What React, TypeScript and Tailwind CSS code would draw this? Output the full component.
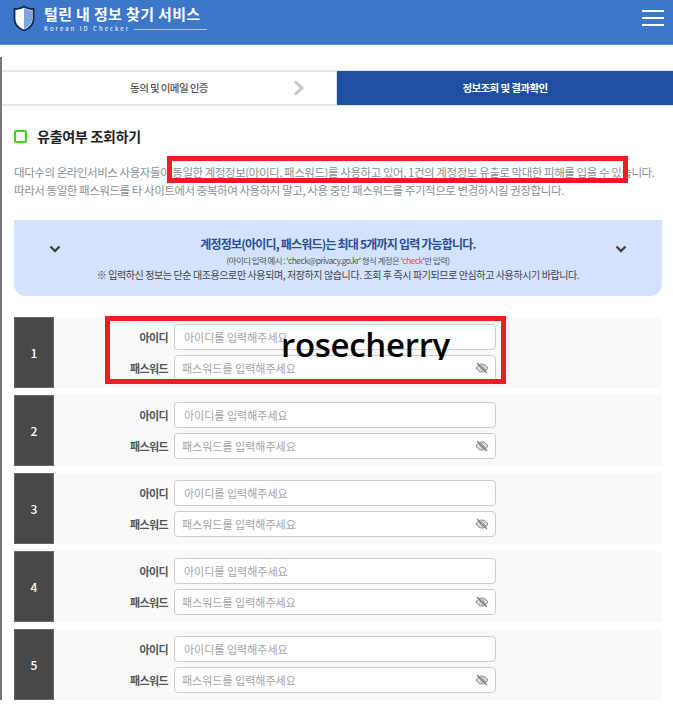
import React from "react";

const rows = [1, 2, 3, 4, 5];

const Shield = () => (
  <svg width="22" height="27" viewBox="0 0 22 27" className="block">
    <path d="M11 1.5 C8 3.5 4.5 4.5 1.5 4 L1.5 14 C1.5 19.5 6 23.5 11 25.5 C16 23.5 20.5 19.5 20.5 14 L20.5 4 C17.5 4.5 14 3.5 11 1.5 Z" fill="#ffffff" stroke="#14264f" strokeWidth="1.8" />
    <path d="M11 3 C13.8 4.8 16.5 5.6 19.2 5.4 L19.2 14 C19.2 18.6 15.4 22 11 24 Z" fill="#7ba6dc" />
  </svg>
);

const Chevron = () => (
  <svg width="12" height="8" viewBox="0 0 12 8" className="block">
    <path d="M1.5 1.5 L6 6 L10.5 1.5" fill="none" stroke="#444444" strokeWidth="2.4" />
  </svg>
);

const EyeOff = () => (
  <svg width="14" height="12" viewBox="0 0 14 12" className="block">
    <path d="M1 6 C3 3 5 2 7 2 C9 2 11 3 13 6 C11 9 9 10 7 10 C5 10 3 9 1 6 Z" fill="#dcdcdc" stroke="#888888" strokeWidth="1" />
    <path d="M4 4 L8 9 M6.500 3 L10.500 8" stroke="#888888" strokeWidth="0.8" />
    <path d="M2 1 L12 11" stroke="#777777" strokeWidth="1.1" />
  </svg>
);

const Field = ({ label, placeholder, eye }: { label: string; placeholder: string; eye?: boolean }) => (
  <div className="flex items-center">
    <span className="w-[120px] pr-[6px] text-right text-[11px] font-bold tracking-[-0.6px] text-[#555555]">{label}</span>
    <div className={`flex h-[26px] w-[322px] items-center justify-between rounded-[4px] border border-[#cccccc] bg-white pr-[6px] ${eye ? "pl-[7px]" : "pl-[9px]"}`}>
      <span className="text-[11px] text-[#a3a3a3]">{placeholder}</span>
      {eye && <EyeOff />}
    </div>
  </div>
);

export default function App() {
  return (
    <div className="relative h-[704px] w-[673px] overflow-hidden bg-white font-['Noto_Sans_CJK_KR','Noto_Sans',sans-serif]">
      <header className="flex h-[45px] items-start justify-between border-b border-[#5a8bd0] bg-[#3c77c9]">
        <div className="ml-[13px] mt-[5px] flex gap-[9px]">
          <Shield />
          <div className="mt-[-2px]">
            <div className="text-[15px] font-bold leading-[22px] tracking-[0.35px] text-white">털린 내 정보 찾기 서비스</div>
            <div className="flex items-center gap-[4px]">
              <span className="text-[6px] leading-[8px] tracking-[2.05px] text-white">Korean ID Checker</span>
              <span className="h-px w-[73px] bg-[#a9c4ea]" />
            </div>
          </div>
        </div>
        <div className="mr-[9px] mt-[10px] flex w-[22px] flex-col gap-[5px]">
          <span className="h-[2px] bg-white" />
          <span className="h-[2px] bg-white" />
          <span className="h-[2px] bg-white" />
        </div>
      </header>

      <div className="mt-[12px] border-l-2 border-[#777777] pt-[13px]">
        <nav className="flex h-[36px] border-y-2 border-[#e6e6e6]">
          <div className="relative flex w-[335px] items-center justify-center border-r border-[#e0e0e0]">
            <span className="text-[10.5px] font-medium tracking-[-0.6px] text-[#555555]">동의 및 이메일 인증</span>
            <svg width="12" height="16" viewBox="0 0 12 16" className="absolute right-[31px] top-[8px]">
              <path d="M2 1.500 L9 8 L2 14.500" fill="none" stroke="#c8c8c8" strokeWidth="3" />
            </svg>
          </div>
          <div className="-my-[1px] flex flex-1 items-center justify-center bg-[#1f4fa0]">
            <span className="text-[10.5px] font-bold tracking-[-0.6px] text-white">정보조회 및 결과확인</span>
          </div>
        </nav>

        <section className="pl-[12px] pr-[11px]">
          <h2 className="mt-[19px] flex items-center gap-[10px] text-[14px] font-bold leading-[22px] tracking-[-0.25px] text-[#222222]">
            <span className="h-[13px] w-[13px] rounded-[2px] border-2 border-[#3fd41a]" />
            유출여부 조회하기
          </h2>

          <p className="mt-[16px] whitespace-nowrap text-[11.5px] leading-[18px] tracking-[-0.45px] text-[#8a8f98]">
            대다수의 온라인서비스 사용자들이 동일한 계정정보(아이디, 패스워드)를 사용하고 있어, 1건의 계정정보 유출로 막대한 피해를 입을 수 있습니다.
            <br />
            따라서 동일한 패스워드를 타 사이트에서 중복하여 사용하지 말고, 사용 중인 패스워드를 주기적으로 변경하시길 권장합니다.
          </p>

          <div className="mt-[21px] flex h-[76px] items-start justify-between rounded-b-[12px] bg-[#d3e3fc] px-[35px]">
            <div className="mt-[25px]"><Chevron /></div>
            <div className="mt-[15px] whitespace-nowrap text-center">
              <div className="text-[12px] font-bold leading-[18px] tracking-[-0.8px] text-[#2a4f96]">
                계정정보(아이디, 패스워드)는 최대 5개까지 입력 가능합니다.
              </div>
              <div className="text-[8.5px] leading-[14px] tracking-[-0.6px] text-[#555555]">
                (아이디 입력 예시 : 'check@privacy.go.kr' 형식 계정은 '<span className="text-[#d9534f]">check</span>'만 입력)
              </div>
              <div className="text-[10px] leading-[15px] tracking-[-0.4px] text-[#444444]">
                ※ 입력하신 정보는 단순 대조용으로만 사용되며, 저장하지 않습니다. 조회 후 즉시 파기되므로 안심하고 사용하시기 바랍니다.
              </div>
            </div>
            <div className="mt-[25px]"><Chevron /></div>
          </div>

          <div className="mt-[21px] flex flex-col gap-[7px]">
            {rows.map((n) => (
              <div key={n} className="flex h-[71px] bg-[#f9f9f9]">
                <div className="flex w-[40px] items-center justify-center border border-[#666666] bg-[#484848] text-[12px] font-medium text-white">
                  {n}
                </div>
                <div className="flex flex-col justify-center gap-[5px]">
                  <Field label="아이디" placeholder="아이디를 입력해주세요" />
                  <Field label="패스워드" placeholder="패스워드를 입력해주세요" eye />
                </div>
              </div>
            ))}
          </div>
        </section>
      </div>

      {/* red annotation boxes drawn on top of the capture */}
      <div className="absolute left-[167px] top-[156px] h-[27px] w-[461px] border-[5px] border-[#ee1c25]" />
      <div className="absolute left-[105px] top-[316px] h-[68px] w-[401px] border-[5px] border-[#ee1c25]" />
      <div className="absolute left-[281px] top-[324px] h-[36px] overflow-hidden font-['Open_Sans',sans-serif] text-[33px] font-semibold leading-[42px] tracking-[-0.3px] text-black">
        rosecherry
      </div>
    </div>
  );
}
